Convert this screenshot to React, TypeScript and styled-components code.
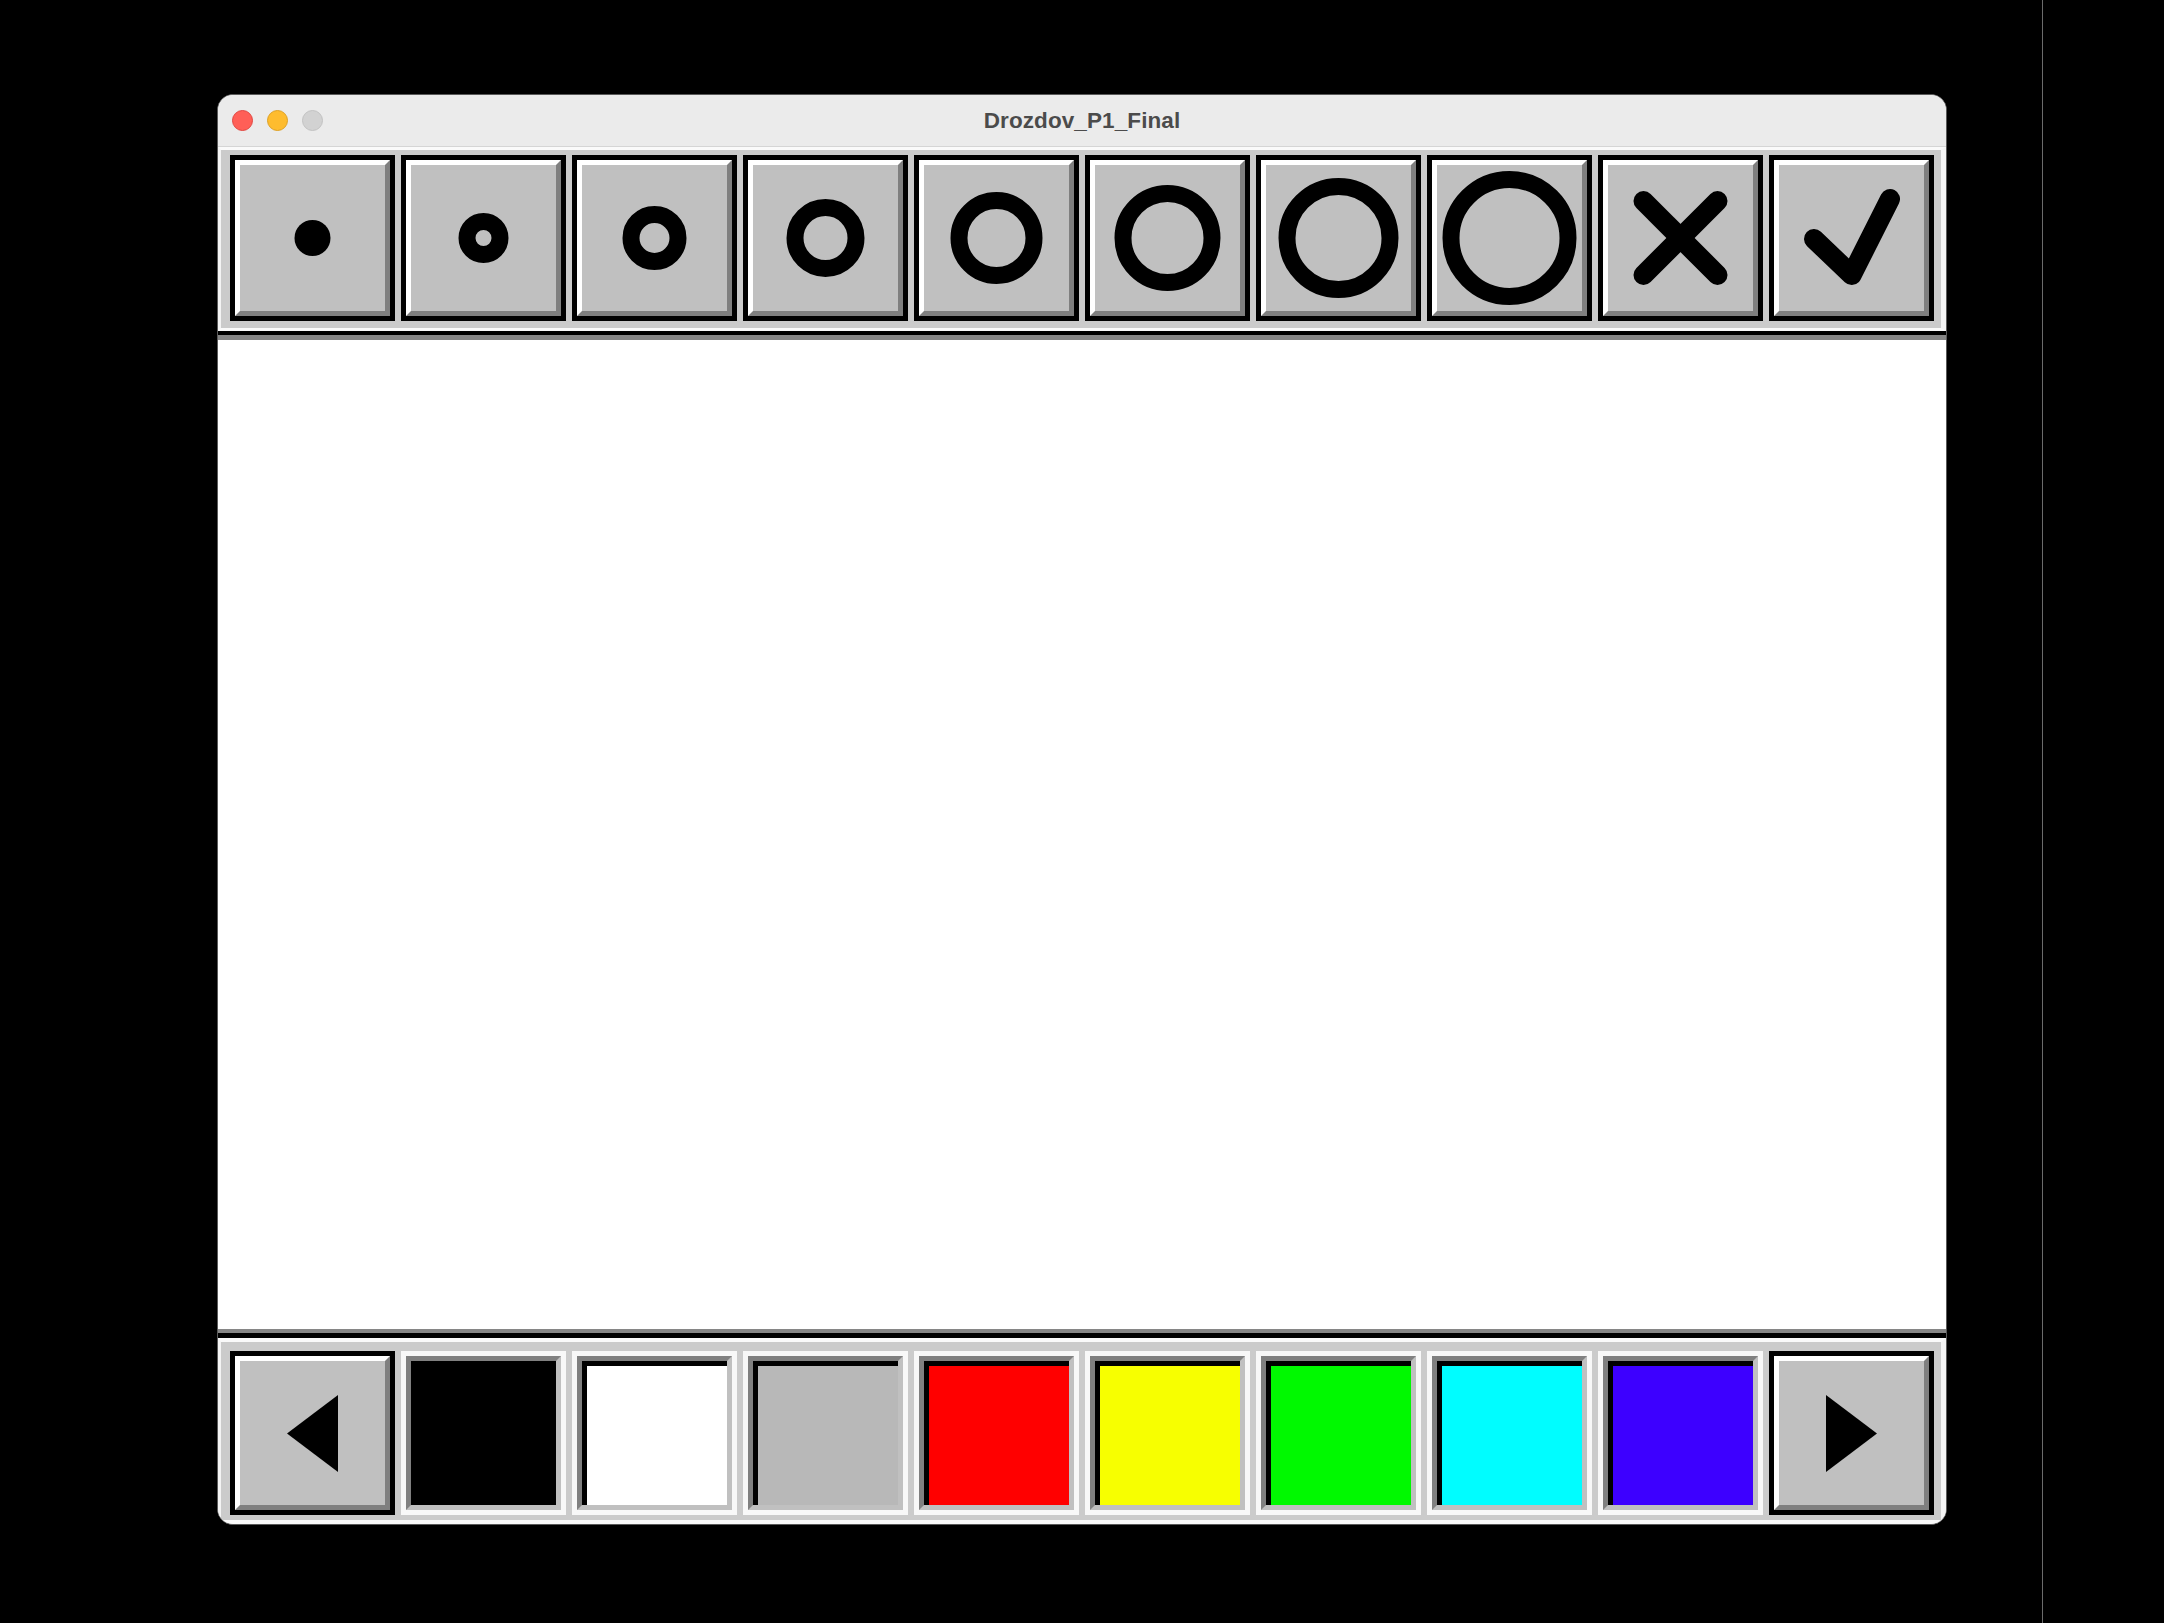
import styled, { createGlobalStyle } from "styled-components";

const GlobalStyle = createGlobalStyle`
  html, body {
    margin: 0;
    padding: 0;
    background: #000;
  }
  body {
    font-family: "Liberation Sans", Arial, sans-serif;
  }
`;

const Screen = styled.div`
  display: flex;
  width: 2164px;
  height: 1623px;
  background: #000;
  overflow: hidden;
`;

const Desktop = styled.div`
  width: 2042px;
  box-sizing: border-box;
  padding: 94px 0 0 217px;
`;

const ScreenEdge = styled.div`
  width: 1px;
  background: #6b6b6b;
`;

const Window = styled.div`
  width: 1730px;
  height: 1431px;
  box-sizing: border-box;
  border: 1px solid #5a5a5a;
  border-radius: 16px;
  overflow: hidden;
  display: flex;
  flex-direction: column;
  background: #fff;
`;

const TitleBar = styled.div`
  height: 52px;
  box-sizing: border-box;
  padding: 0 14px;
  background: #ebebeb;
  border-bottom: 1px solid #d5d5d5;
  display: grid;
  grid-template-columns: 1fr auto 1fr;
  align-items: center;
`;

const Lights = styled.div`
  display: flex;
  gap: 14px;
`;

const Light = styled.span<{ $fill: string; $ring: string }>`
  width: 21px;
  height: 21px;
  box-sizing: border-box;
  border-radius: 50%;
  background: ${(p) => p.$fill};
  border: 1px solid ${(p) => p.$ring};
`;

const Title = styled.div`
  font-size: 22.5px;
  font-weight: 700;
  color: #4b4b4b;
  letter-spacing: 0.1px;
`;

const Panel = styled.div<{ $bottom?: boolean }>`
  display: grid;
  grid-template-columns: repeat(10, 165px);
  column-gap: 6px;
  background: #cbcbcb;
  border-left: 3px solid #f4f4f4;
  border-right: 5px solid #f4f4f4;
  border-top: ${(p) => (p.$bottom ? 4 : 3)}px solid #fafafa;
  border-bottom: ${(p) => (p.$bottom ? 4 : 3)}px solid #fafafa;
  padding: ${(p) => (p.$bottom ? "9px 7px 5px 9px" : "5px 7px 7px 9px")};
`;

const RaisedButton = styled.div<{ $h: number }>`
  height: ${(p) => p.$h}px;
  box-sizing: border-box;
  border: 5px solid #000;
  display: flex;
`;

const Bevel = styled.div`
  flex: 1;
  display: flex;
  border: 5px solid;
  border-color: #ffffff #7f7f7f #7f7f7f #ffffff;
  background: #c0c0c0;

  svg {
    display: block;
    width: 100%;
    height: 100%;
  }
`;

const SwatchCell = styled.div`
  height: 164px;
  box-sizing: border-box;
  border: 5px solid #f8f8f8;
  display: flex;
`;

const Swatch = styled.div<{ $color: string }>`
  flex: 1;
  border: 5px solid;
  border-color: #808080 #c0c0c0 #c0c0c0 #808080;
  box-shadow: inset 5px 5px 0 #000;
  background: ${(p) => p.$color};
`;

const CanvasFrame = styled.div`
  flex: 1;
  display: flex;
  flex-direction: column;
  border-top: 4px solid #000;
  border-bottom: 5px solid #000;
`;

const DrawArea = styled.div`
  flex: 1;
  background: #fff;
  border-top: 5px solid #868686;
  border-bottom: 4px solid #868686;
`;

const brushSizes = [36, 50, 64, 78, 92, 106, 120, 134];
const STROKE = 17;

const palette = [
  "#000000",
  "#ffffff",
  "#b8b8b8",
  "#ff0000",
  "#f7ff00",
  "#00f900",
  "#00fdff",
  "#3d00ff",
];

function BrushIcon({ size }: { size: number }) {
  return (
    <svg viewBox="0 0 145 146">
      {size <= 36 ? (
        <circle cx="72.5" cy="73" r={size / 2} fill="#000" />
      ) : (
        <circle
          cx="72.5"
          cy="73"
          r={size / 2 - STROKE / 2}
          fill="none"
          stroke="#000"
          strokeWidth={STROKE}
        />
      )}
    </svg>
  );
}

function ClearIcon() {
  return (
    <svg viewBox="0 0 145 146">
      <g stroke="#000" strokeWidth="20" strokeLinecap="round">
        <line x1="35.5" y1="36" x2="109.5" y2="110" />
        <line x1="109.5" y1="36" x2="35.5" y2="110" />
      </g>
    </svg>
  );
}

function DoneIcon() {
  return (
    <svg viewBox="0 0 145 146">
      <polyline
        points="35,74 72.7,110 111,34"
        fill="none"
        stroke="#000"
        strokeWidth="20"
        strokeLinecap="round"
        strokeLinejoin="round"
      />
    </svg>
  );
}

function Arrow({ dir }: { dir: "left" | "right" }) {
  return (
    <svg viewBox="0 0 145 144">
      <polygon
        points={
          dir === "left" ? "47,72.5 98,34 98,111" : "47,34 47,111 98,72.5"
        }
        fill="#000"
      />
    </svg>
  );
}

export default function App() {
  return (
    <>
      <GlobalStyle />
      <Screen>
        <Desktop>
          <Window>
            <TitleBar>
              <Lights>
                <Light $fill="#ff5f57" $ring="#e14640" />
                <Light $fill="#febc2e" $ring="#dea123" />
                <Light $fill="#d2d2d2" $ring="#c2c2c2" />
              </Lights>
              <Title>Drozdov_P1_Final</Title>
              <div />
            </TitleBar>

            <Panel>
              {brushSizes.map((s) => (
                <RaisedButton key={s} $h={166}>
                  <Bevel>
                    <BrushIcon size={s} />
                  </Bevel>
                </RaisedButton>
              ))}
              <RaisedButton $h={166}>
                <Bevel>
                  <ClearIcon />
                </Bevel>
              </RaisedButton>
              <RaisedButton $h={166}>
                <Bevel>
                  <DoneIcon />
                </Bevel>
              </RaisedButton>
            </Panel>

            <CanvasFrame>
              <DrawArea />
            </CanvasFrame>

            <Panel $bottom>
              <RaisedButton $h={164}>
                <Bevel>
                  <Arrow dir="left" />
                </Bevel>
              </RaisedButton>
              {palette.map((c) => (
                <SwatchCell key={c}>
                  <Swatch $color={c} />
                </SwatchCell>
              ))}
              <RaisedButton $h={164}>
                <Bevel>
                  <Arrow dir="right" />
                </Bevel>
              </RaisedButton>
            </Panel>
          </Window>
        </Desktop>
        <ScreenEdge />
      </Screen>
    </>
  );
}
